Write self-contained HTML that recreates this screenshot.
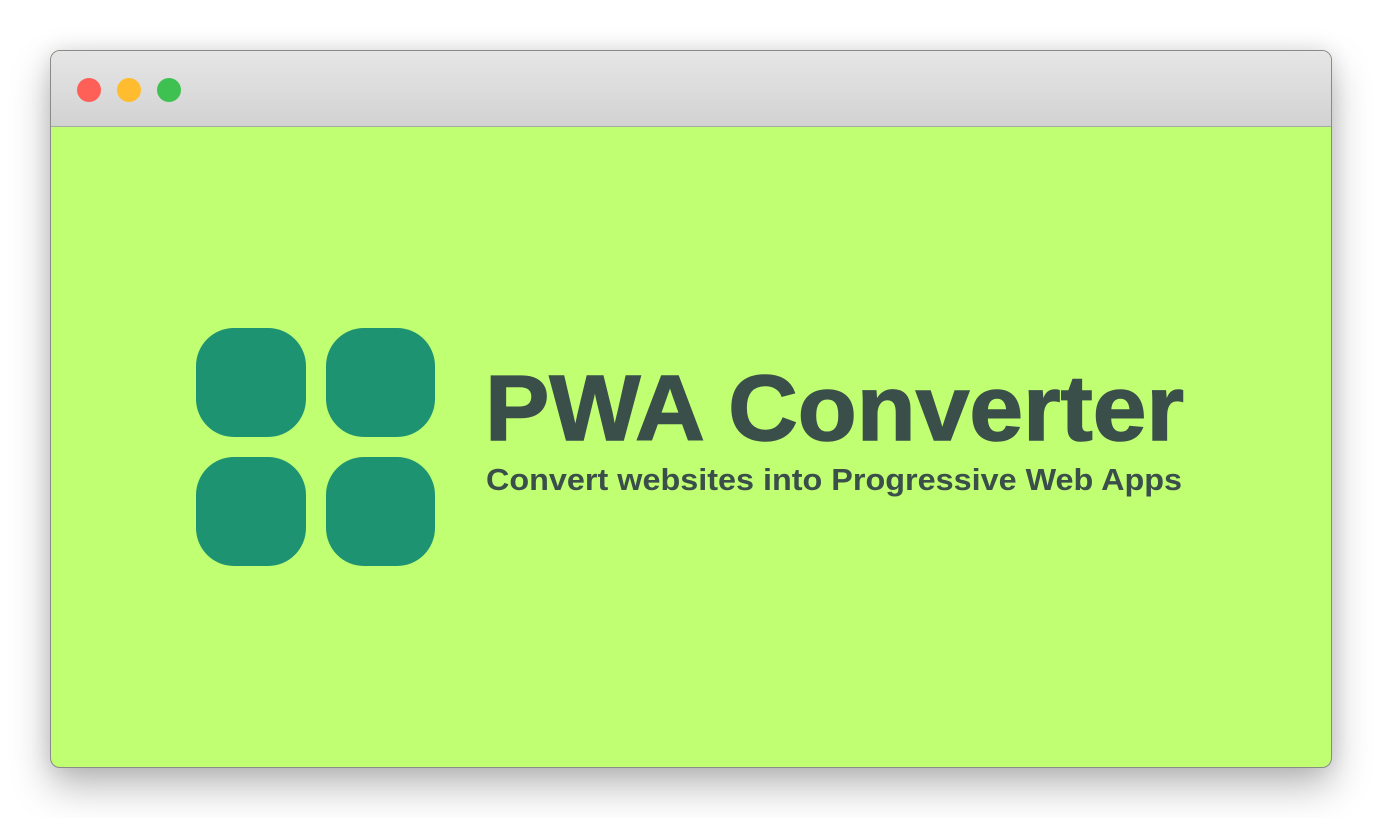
<!DOCTYPE html>
<html><head><meta charset="utf-8"><style>
html,body{margin:0;padding:0;width:1382px;height:818px;background:#fff;overflow:hidden}
.win{position:absolute;left:50px;top:50px;width:1280px;height:716px;border:1px solid #8a8a8a;border-radius:10px;overflow:hidden;box-shadow:0 18px 40px rgba(0,0,0,.28),0 0 20px rgba(0,0,0,.10);background:#c1ff72}
.bar{position:absolute;left:0;top:0;width:100%;height:75px;background:linear-gradient(#e6e6e6,#d2d2d2);border-bottom:1px solid #a8a8a8}
.d{position:absolute;top:27px;width:24px;height:24px;border-radius:50%}
svg{position:absolute;left:0;top:0}
</style></head><body>
<div class="win"><div class="bar">
<div class="d" style="left:26px;background:#fe5f57"></div>
<div class="d" style="left:66px;background:#febc2e"></div>
<div class="d" style="left:106px;background:#3fc152"></div>
</div></div>
<svg width="1382" height="818">
<g fill="#1d9372">
<rect x="196" y="328" width="110" height="109" rx="38"/>
<rect x="326" y="328" width="109" height="109" rx="38"/>
<rect x="196" y="457" width="110" height="109" rx="38"/>
<rect x="326" y="457" width="109" height="109" rx="38"/>
</g>
<g fill="#3a4f4a" font-family="Liberation Sans, sans-serif" font-weight="bold">
<text x="485" y="440" font-size="93" stroke="#3a4f4a" stroke-width="1.5" textLength="699" lengthAdjust="spacingAndGlyphs">PWA Converter</text>
<text x="486" y="490" font-size="31" textLength="696" lengthAdjust="spacingAndGlyphs">Convert websites into Progressive Web Apps</text>
</g>
</svg>
</body></html>
